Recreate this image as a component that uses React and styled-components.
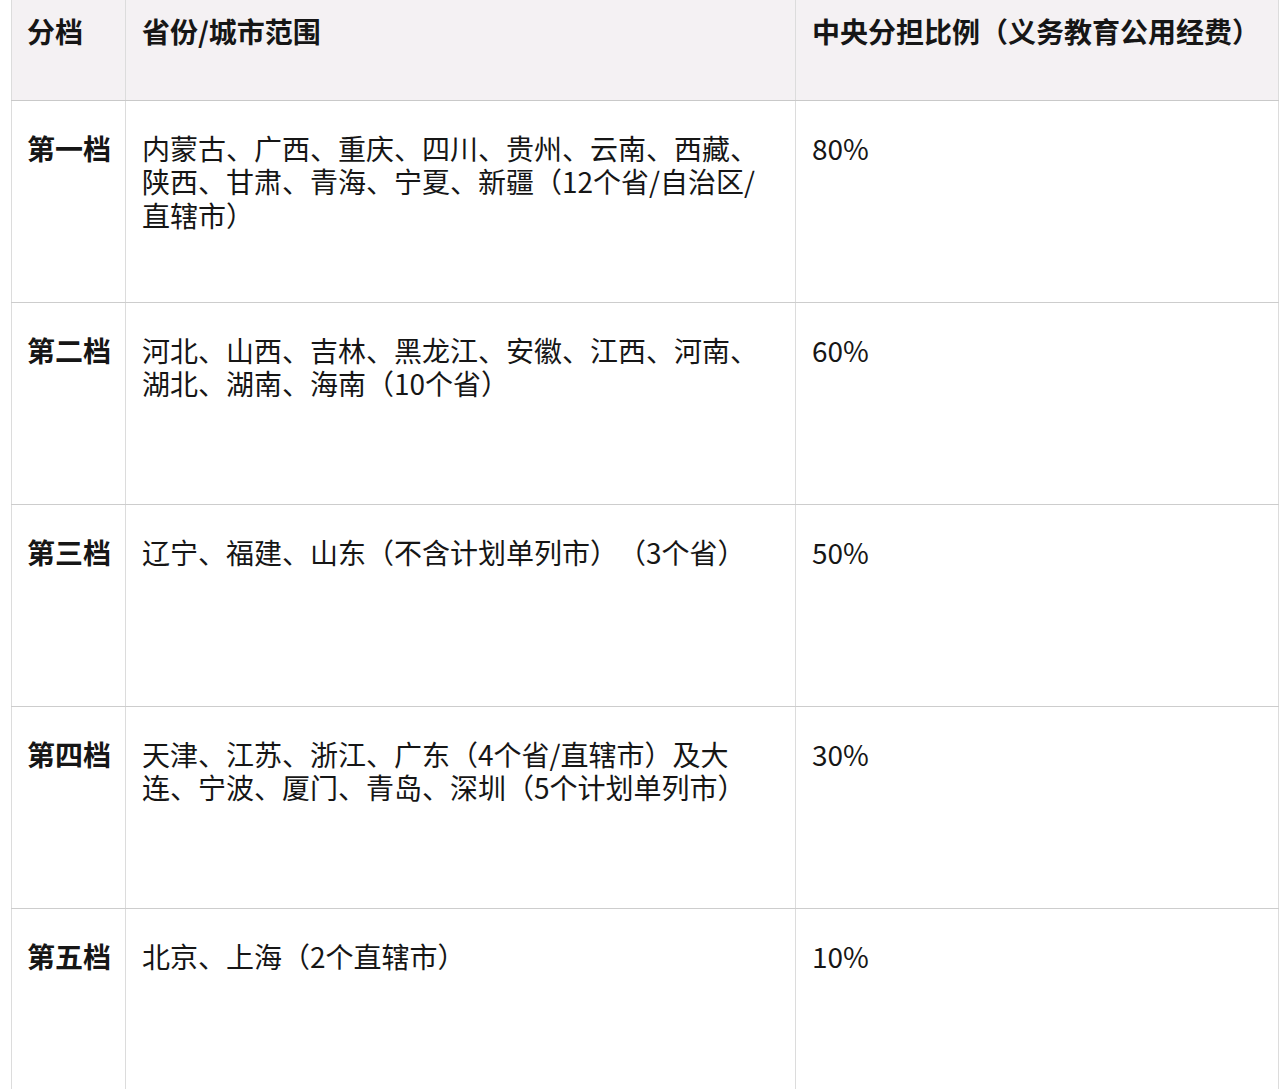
import React from "react";
import styled, { createGlobalStyle } from "styled-components";

const Global = createGlobalStyle`
  html, body { margin: 0; padding: 0; background: #ffffff; }
  body {
    font-family: "Noto Sans CJK SC", "Noto Sans", sans-serif;
    color: #161616;
    text-spacing-trim: space-all;
  }
`;

const Page = styled.div`
  padding: 0 2px 0 11px;
  height: 1089px;
  overflow: hidden;
`;

const Table = styled.table`
  width: 1267px;
  border-collapse: collapse;
  table-layout: fixed;
  font-size: 28px;
  line-height: 33.6px;
  text-spacing-trim: space-all;
`;

const Col = styled.col`
  width: ${(p) => p.$w}px;
`;

const HeadCell = styled.th`
  background: #f4f1f3;
  height: 100px;
  box-sizing: border-box;
  padding: 15px 16px 0 ${(p) => (p.$first ? 15 : 16)}px;
  text-align: left;
  vertical-align: top;
  font-weight: 700;
  border-left: 1px solid #dcdcdc;
  border-right: 1px solid #dcdcdc;
  border-bottom: 1px solid #c9c9c9;
  white-space: nowrap;
`;

const Row = styled.tr`
  height: 202px;
`;

const Cell = styled.td`
  box-sizing: border-box;
  height: 202px;
  padding: 31px ${(p) => (p.$bold ? 0 : 16)}px 0 ${(p) => (p.$bold ? 15 : 16)}px;
  vertical-align: top;
  font-weight: ${(p) => (p.$bold ? 700 : 400)};
  white-space: ${(p) => (p.$bold ? "nowrap" : "normal")};
  border-left: 1px solid #dcdcdc;
  border-right: 1px solid #dcdcdc;
  border-bottom: 1px solid #cdcdcd;
  word-break: break-all;
`;

const rows = [
  ["第一档", "内蒙古、广西、重庆、四川、贵州、云南、西藏、陕西、甘肃、青海、宁夏、新疆（12个省/自治区/直辖市）", "80%"],
  ["第二档", "河北、山西、吉林、黑龙江、安徽、江西、河南、湖北、湖南、海南（10个省）", "60%"],
  ["第三档", "辽宁、福建、山东（不含计划单列市）（3个省）", "50%"],
  ["第四档", "天津、江苏、浙江、广东（4个省/直辖市）及大连、宁波、厦门、青岛、深圳（5个计划单列市）", "30%"],
  ["第五档", "北京、上海（2个直辖市）", "10%"],
];

export default function App() {
  return (
    <>
      <Global />
      <Page>
        <Table>
          <colgroup>
            <Col $w={114} />
            <Col $w={670} />
            <Col $w={483} />
          </colgroup>
          <thead>
            <tr>
              <HeadCell $first>分档</HeadCell>
              <HeadCell>省份/城市范围</HeadCell>
              <HeadCell>中央分担比例（义务教育公用经费）</HeadCell>
            </tr>
          </thead>
          <tbody>
            {rows.map(([tier, scope, pct]) => (
              <Row key={tier}>
                <Cell $bold>{tier}</Cell>
                <Cell>{scope}</Cell>
                <Cell>{pct}</Cell>
              </Row>
            ))}
          </tbody>
        </Table>
      </Page>
    </>
  );
}
